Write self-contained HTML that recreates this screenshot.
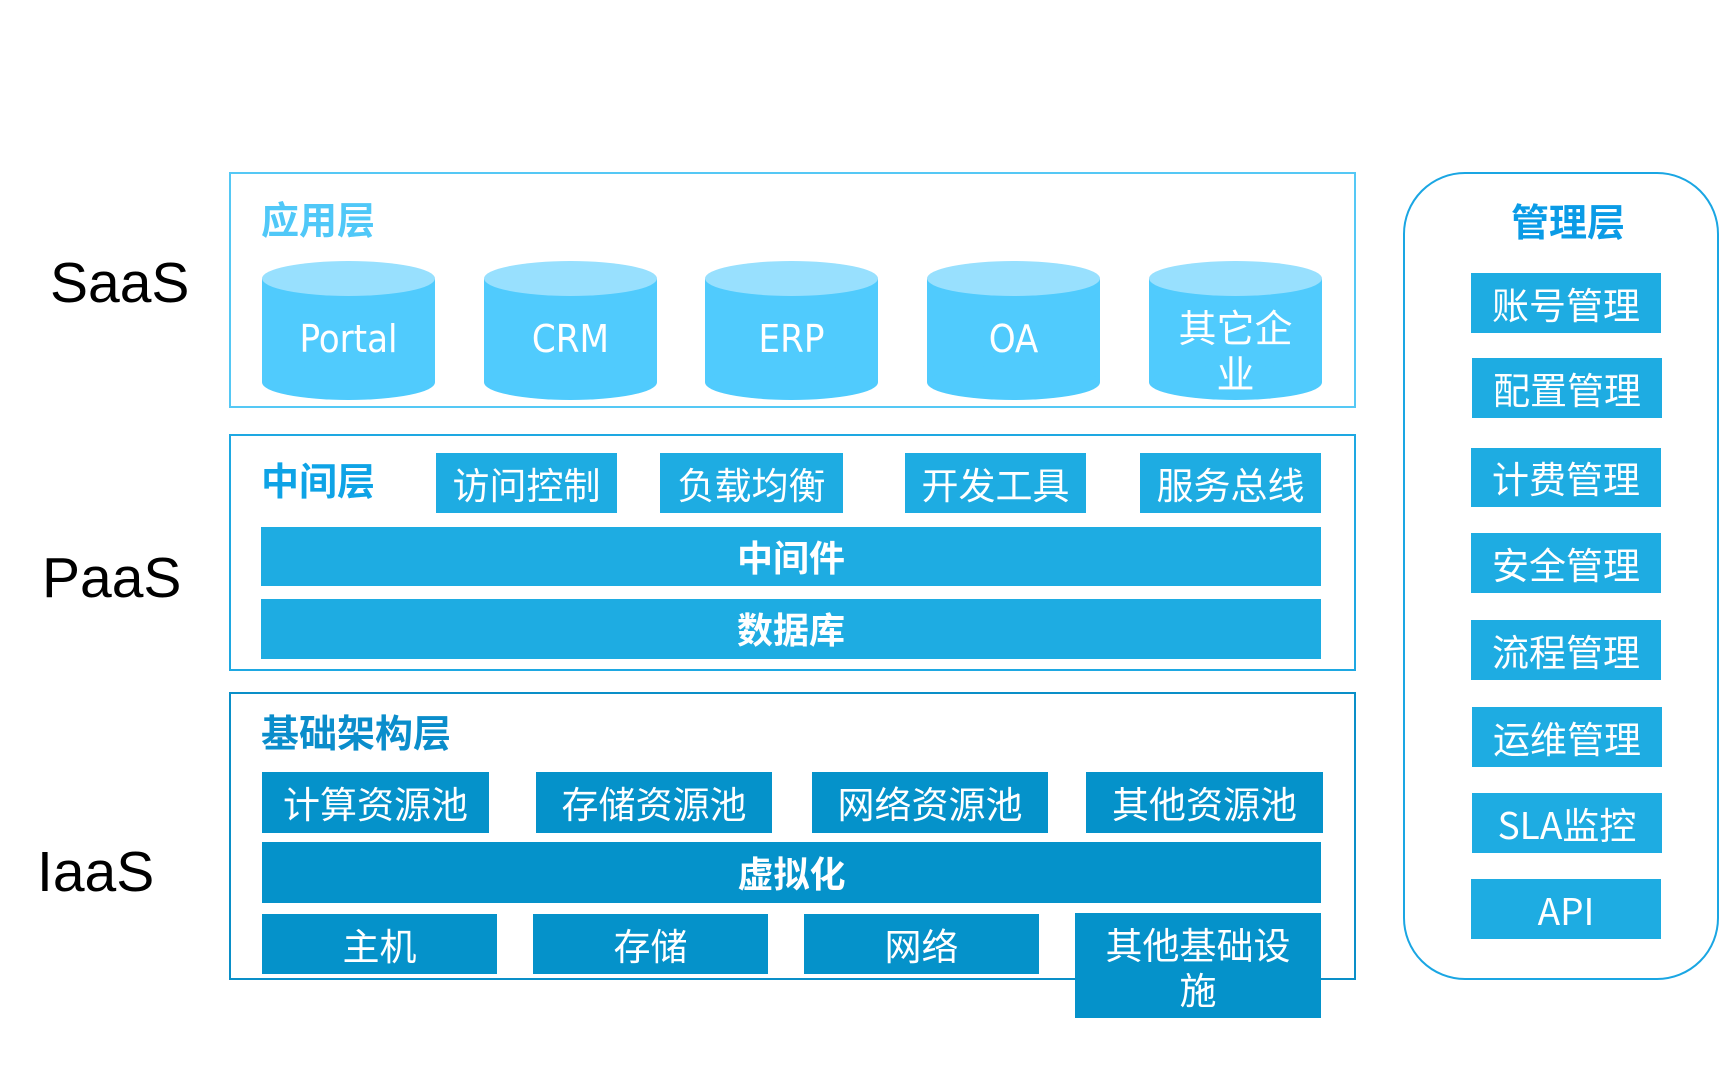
<!DOCTYPE html>
<html><head><meta charset="utf-8"><style>
*{margin:0;padding:0;box-sizing:border-box}
body{width:1721px;height:1069px;background:#fff;position:relative;overflow:hidden;font-family:"Liberation Sans","Noto Sans CJK SC",sans-serif}
.lbl{position:absolute;font-family:"Liberation Sans",sans-serif;font-size:57px;color:#000;line-height:1}
.box{position:absolute;border:2px solid}
.t{position:absolute;font-weight:bold;font-size:38px;line-height:1;font-family:"Noto Sans CJK SC",sans-serif}
.btn{position:absolute;color:#fff;display:flex;align-items:center;justify-content:center;font-size:37px;font-family:"Noto Sans CJK SC","Liberation Sans",sans-serif;line-height:1.1;text-align:center}
.cyl{position:absolute;width:173px;height:139px;overflow:hidden}
.cyl .body{position:absolute;left:0;top:18px;width:173px;height:103px;background:#50cbfd}
.cyl .bot{position:absolute;left:0;top:104px;width:173px;height:35px;border-radius:50%;background:#50cbfd}
.cyl .top{position:absolute;left:0;top:0;width:173px;height:35px;border-radius:50%;background:#98e0fe}
.cyl .tx{position:absolute;left:0;width:173px;text-align:center;color:#fff;font-size:38px;line-height:46px;font-family:"DejaVu Sans Condensed","Liberation Sans Narrow","Noto Sans CJK SC",sans-serif}
.b1{background:#1eace2}
.b3{background:#0592ca}
</style></head><body>
<div class="lbl" style="left:50px;top:255px">SaaS</div>
<div class="lbl" style="left:42px;top:550px">PaaS</div>
<div class="lbl" style="left:37px;top:844px">IaaS</div>

<div class="box" style="left:229px;top:172px;width:1127px;height:236px;border-color:#55c8f5"></div>
<div class="t" style="left:261px;top:199px;color:#50c8f8">应用层</div>
<div class="cyl" style="left:262px;top:261px"><div class="body"></div><div class="bot"></div><div class="top"></div><div class="tx" style="top:55px">Portal</div></div>
<div class="cyl" style="left:484px;top:261px"><div class="body"></div><div class="bot"></div><div class="top"></div><div class="tx" style="top:55px">CRM</div></div>
<div class="cyl" style="left:705px;top:261px"><div class="body"></div><div class="bot"></div><div class="top"></div><div class="tx" style="top:55px">ERP</div></div>
<div class="cyl" style="left:927px;top:261px"><div class="body"></div><div class="bot"></div><div class="top"></div><div class="tx" style="top:55px">OA</div></div>
<div class="cyl" style="left:1149px;top:261px"><div class="body"></div><div class="bot"></div><div class="top"></div><div class="tx" style="top:42px;font-family:'Noto Sans CJK SC',sans-serif">其它企<br>业</div></div>

<div class="box" style="left:229px;top:434px;width:1127px;height:237px;border-color:#1ea8e2"></div>
<div class="t" style="left:261px;top:460px;color:#0ea3e6">中间层</div>
<div class="btn b1" style="left:436px;top:453px;width:181px;height:60px">访问控制</div>
<div class="btn b1" style="left:660px;top:453px;width:183px;height:60px">负载均衡</div>
<div class="btn b1" style="left:905px;top:453px;width:181px;height:60px">开发工具</div>
<div class="btn b1" style="left:1140px;top:453px;width:181px;height:60px">服务总线</div>
<div class="btn b1" style="left:261px;top:527px;width:1060px;height:59px;font-weight:bold;font-size:36px">中间件</div>
<div class="btn b1" style="left:261px;top:599px;width:1060px;height:60px;font-weight:bold;font-size:36px">数据库</div>

<div class="box" style="left:229px;top:692px;width:1127px;height:288px;border-color:#0a8fc8"></div>
<div class="t" style="left:261px;top:712px;color:#0a8dcb">基础架构层</div>
<div class="btn b3" style="left:262px;top:772px;width:227px;height:61px">计算资源池</div>
<div class="btn b3" style="left:536px;top:772px;width:236px;height:61px">存储资源池</div>
<div class="btn b3" style="left:812px;top:772px;width:236px;height:61px">网络资源池</div>
<div class="btn b3" style="left:1086px;top:772px;width:237px;height:61px">其他资源池</div>
<div class="btn b3" style="left:262px;top:842px;width:1059px;height:61px;font-weight:bold;font-size:36px">虚拟化</div>
<div class="btn b3" style="left:262px;top:914px;width:235px;height:60px">主机</div>
<div class="btn b3" style="left:533px;top:914px;width:235px;height:60px">存储</div>
<div class="btn b3" style="left:804px;top:914px;width:235px;height:60px">网络</div>
<div class="btn b3" style="left:1075px;top:913px;width:246px;height:105px;line-height:1.2">其他基础设<br>施</div>

<div class="box" style="left:1403px;top:172px;width:316px;height:808px;border-color:#1aa6e3;border-radius:62px"></div>
<div class="t" style="left:1410px;width:316px;text-align:center;top:201px;color:#0a9be6">管理层</div>
<div class="btn b1" style="left:1471px;top:273px;width:190px;height:60px">账号管理</div>
<div class="btn b1" style="left:1472px;top:358px;width:190px;height:60px">配置管理</div>
<div class="btn b1" style="left:1471px;top:448px;width:190px;height:59px">计费管理</div>
<div class="btn b1" style="left:1471px;top:533px;width:190px;height:60px">安全管理</div>
<div class="btn b1" style="left:1471px;top:620px;width:190px;height:60px">流程管理</div>
<div class="btn b1" style="left:1472px;top:707px;width:190px;height:60px">运维管理</div>
<div class="btn b1" style="left:1472px;top:793px;width:190px;height:60px">SLA监控</div>
<div class="btn b1" style="left:1471px;top:879px;width:190px;height:60px">API</div>
</body></html>
